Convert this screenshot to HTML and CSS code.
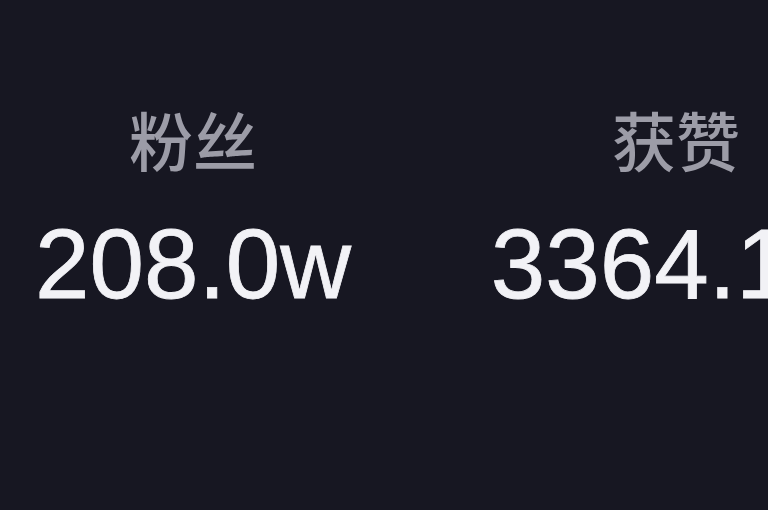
FILE: index.html
```html
<!DOCTYPE html>
<html lang="zh">
<head>
<meta charset="utf-8">
<link rel="stylesheet" href="styles.css">
</head>
<body>
<div class="stats">
  <div class="stat">
    <div class="label">粉丝</div>
    <div class="value">208.0w</div>
  </div>
  <div class="stat">
    <div class="label">获赞</div>
    <div class="value">3364.1w</div>
  </div>
</div>
</body>
</html>
```
FILE: styles.css
```css
html, body {
  margin: 0;
  padding: 0;
  width: 768px;
  height: 510px;
  overflow: hidden;
  background: #171722;
}
.stats {
  display: flex;
  gap: 97px;
  padding-top: 106px;
}
.stat {
  flex: 0 0 386px;
  display: flex;
  flex-direction: column;
  align-items: center;
  gap: 45px;
}
.label {
  font-family: "Noto Sans CJK SC", "Noto Sans", sans-serif;
  font-size: 64px;
  font-weight: 500;
  line-height: 64px;
  color: #9c9ca7;
  white-space: nowrap;
}
.value {
  font-family: "Liberation Sans", Arial, sans-serif;
  font-size: 98px;
  line-height: 98px;
  color: #f2f2f6;
  -webkit-text-stroke: 0.8px #f2f2f6;
  white-space: nowrap;
}
```
